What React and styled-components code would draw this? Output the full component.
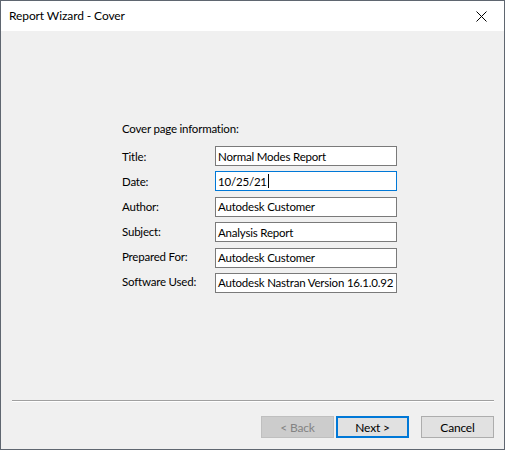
import React from "react";
import styled, { createGlobalStyle } from "styled-components";

const Global = createGlobalStyle`
  html, body { margin: 0; padding: 0; background: #ffffff; }
  body { font-family: Lato, "Liberation Sans", sans-serif; }
  * { box-sizing: border-box; }
`;

const Window = styled.div`
  width: 505px;
  height: 450px;
  border: 1px solid #5f6670;
  display: flex;
  flex-direction: column;
  background: #f0f0f0;
  font-size: 11.5px;
  letter-spacing: -0.2px;
  color: #000;
`;

const TitleBar = styled.div`
  height: 30px;
  background: #ffffff;
  display: flex;
  align-items: center;
  justify-content: space-between;
  padding-left: 8px;
  flex-shrink: 0;
`;

const TitleText = styled.div`
  font-size: 12px;
  letter-spacing: -0.1px;
  line-height: 16px;
  margin-top: -1px;
`;

const CloseBox = styled.div`
  width: 46px;
  height: 30px;
  display: flex;
  align-items: center;
  justify-content: center;
`;

const Body = styled.div`
  flex: 1;
  display: flex;
  flex-direction: column;
`;

const Content = styled.div`
  flex: 1;
  padding: 90px 0 0 121px;
`;

const Heading = styled.div`
  line-height: 15px;
  margin-bottom: 10px;
`;

const Form = styled.div`
  display: grid;
  grid-template-columns: 93px 182px;
  grid-auto-rows: 20px;
  row-gap: 5.4px;
  align-items: center;
`;

const Label = styled.div`
  line-height: 15px;
  margin-top: ${(p) => p.$shift || 0}px;
`;

const Field = styled.div`
  height: 20px;
  border: 1px solid ${(p) => (p.$focused ? "#0078d7" : "#7a7a7a")};
  background: #ffffff;
  padding-left: 2px;
  display: flex;
  align-items: center;
  line-height: 15px;
  white-space: nowrap;
  overflow: hidden;
`;

const Caret = styled.span`
  display: inline-block;
  width: 1px;
  height: 14px;
  background: #000;
  margin-left: 1px;
`;

const Footer = styled.div`
  padding: 0 10px 11px 11px;
`;

const Separator = styled.div`
  border-top: 1px solid #a0a0a0;
  border-bottom: 1px solid #ffffff;
  margin-bottom: 14px;
`;

const ButtonRow = styled.div`
  display: flex;
  justify-content: flex-end;
  gap: 2px;
`;

const Button = styled.div`
  width: 73px;
  height: 22px;
  display: flex;
  align-items: center;
  justify-content: center;
  background: ${(p) => (p.$disabled ? "#cccccc" : "#e1e1e1")};
  border: ${(p) =>
    p.$default ? "2px solid #0078d7" : p.$disabled ? "1px solid #bfbfbf" : "1px solid #adadad"};
  color: ${(p) => (p.$disabled ? "#838383" : "#000")};
  margin-left: ${(p) => p.$gap || 0}px;
  line-height: 15px;
  font-size: 12px;
`;

const rows = [
  { label: "Title:", value: "Normal Modes Report" },
  { label: "Date:", value: "10/25/21", focused: true },
  { label: "Author:", value: "Autodesk Customer" },
  { label: "Subject:", value: "Analysis Report", shift: -2 },
  { label: "Prepared For:", value: "Autodesk Customer", shift: -2 },
  { label: "Software Used:", value: "Autodesk Nastran Version 16.1.0.92", shift: -2 },
];

export default function App() {
  return (
    <>
      <Global />
      <Window>
        <TitleBar>
          <TitleText>Report Wizard - Cover</TitleText>
          <CloseBox>
            <svg width="11" height="11" viewBox="0 0 11 11">
              <path d="M0.5 0.5 L10.5 10.5 M10.5 0.5 L0.5 10.5" stroke="#000" strokeWidth="1" />
            </svg>
          </CloseBox>
        </TitleBar>
        <Body>
          <Content>
            <Heading>Cover page information:</Heading>
            <Form>
              {rows.map((r) => (
                <React.Fragment key={r.label}>
                  <Label $shift={r.shift}>{r.label}</Label>
                  <Field $focused={r.focused}>
                    {r.value}
                    {r.focused && <Caret />}
                  </Field>
                </React.Fragment>
              ))}
            </Form>
          </Content>
          <Footer>
            <Separator />
            <ButtonRow>
              <Button $disabled>&lt; Back</Button>
              <Button $default>Next &gt;</Button>
              <Button $gap={10}>Cancel</Button>
            </ButtonRow>
          </Footer>
        </Body>
      </Window>
    </>
  );
}
